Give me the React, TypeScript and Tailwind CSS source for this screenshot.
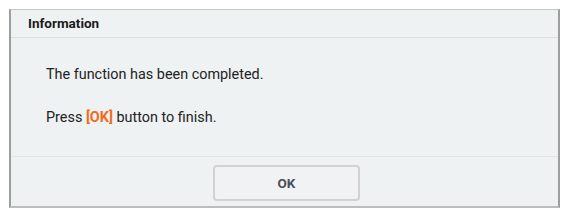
import React from 'react';

const App: React.FC = () => {
  return (
    <div className="w-[569px] h-[217px] bg-white pt-[9px] pl-[9px]" style={{ fontFamily: 'Roboto, "Liberation Sans", sans-serif' }}>
      <div className="w-[551px] h-[199px] bg-[#eff2f3] border-t border-t-[#c6c6c6] border-l-2 border-l-[#9e9e9e] border-r-2 border-r-[#9e9e9e] border-b-2 border-b-[#bdbdbd] flex flex-col">
        {/* header */}
        <div className="h-[28px] border-b border-[#dcdfe1] flex items-center pl-[17px]">
          <span className="text-[13.5px] font-bold text-[#1a1a1a]">Information</span>
        </div>

        {/* message */}
        <div className="h-[119px] border-b border-[#e2e4e6] pl-[35px] pt-[27px] text-[14.4px] text-[#222]">
          <p className="leading-[20px]">The function has been completed.</p>
          <p className="leading-[20px] mt-[23px]">
            Press <span className="font-bold text-[#f26b1d]">[OK]</span> button to finish.
          </p>
        </div>

        {/* footer */}
        <div className="flex-1 pt-[8px] pl-[202px]">
          <button className="w-[147px] h-[36px] rounded-[4px] border-2 border-[#d0d2d4] bg-[#f0f2f3] text-[13.5px] font-bold text-[#4a4d55]">
            OK
          </button>
        </div>
      </div>
    </div>
  );
};

export default App;
